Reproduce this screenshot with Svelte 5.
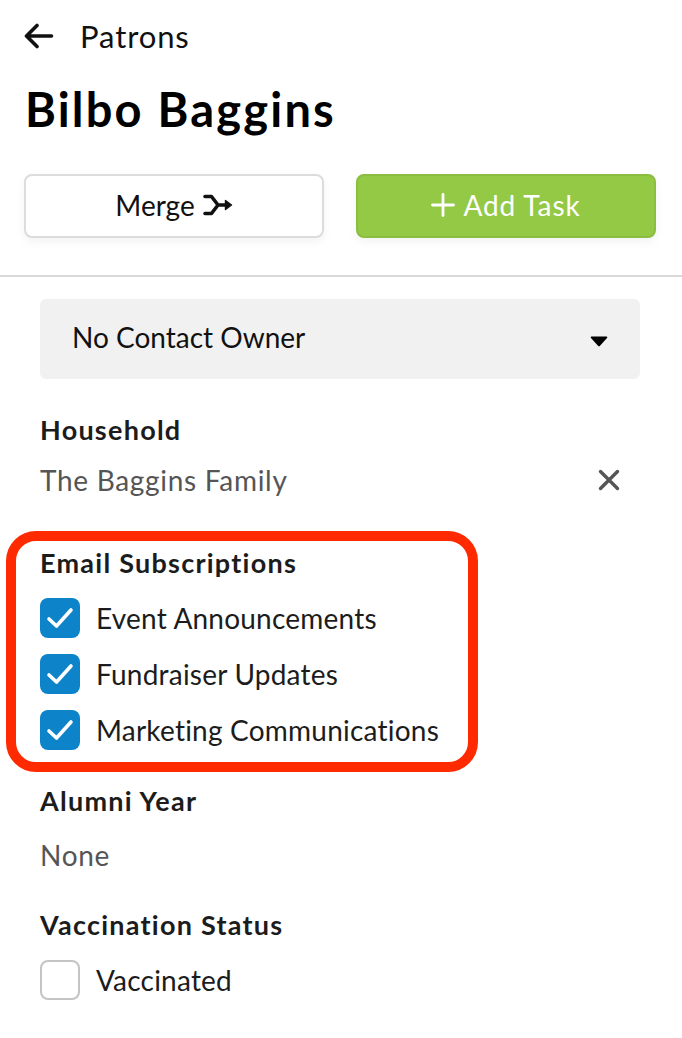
<script>
  const subscriptions = ['Event Announcements', 'Fundraiser Updates', 'Marketing Communications'];
</script>

<div class="page">
  <header class="top">
    <div class="crumb">
      <svg class="back" viewBox="0 0 30 26" fill="none" stroke="currentColor" stroke-width="3.6" stroke-linecap="round" stroke-linejoin="round">
        <path d="M27.5 13 H3 M13 2.5 L2.5 13 L13 23.5"/>
      </svg>
      <span>Patrons</span>
    </div>
    <h1>Bilbo Baggins</h1>
    <div class="actions">
      <button class="btn">
        Merge
        <svg class="merge" viewBox="0 0 30 22" fill="none" stroke="currentColor" stroke-width="3.6" stroke-linecap="round" stroke-linejoin="round">
          <path d="M2 2.5 H8.5 L15 11 L8.5 19.5 H2 M15 11 H23"/>
          <path d="M22.5 6.5 L28.5 11 L22.5 15.5 Z" fill="currentColor" stroke-width="1.4"/>
        </svg>
      </button>
      <button class="btn primary">
        <svg class="plus" viewBox="0 0 24 24" fill="none" stroke="currentColor" stroke-width="2.8" stroke-linecap="round">
          <path d="M12 1.5 V22.5 M1.5 12 H22.5"/>
        </svg>
        <span class="add-label">Add Task</span>
      </button>
    </div>
  </header>

  <main class="body">
    <div class="select">
      <span class="select-label">No Contact Owner</span>
      <svg class="caret" viewBox="0 0 18 11"><path d="M1.5 0.5 H16.5 Q18 0.5 17 2 L10 9.8 Q9 10.8 8 9.8 L1 2 Q0 0.5 1.5 0.5 Z" fill="#000"/></svg>
    </div>

    <section class="household">
      <h2>Household</h2>
      <div class="value-row">
        <span class="muted">The Baggins Family</span>
        <svg class="close" viewBox="0 0 22 22" fill="none" stroke="#555" stroke-width="3.4" stroke-linecap="round">
          <path d="M2.5 2.5 L19.5 19.5 M19.5 2.5 L2.5 19.5"/>
        </svg>
      </div>
    </section>

    <section class="subs">
      <h2>Email Subscriptions</h2>
      <ul>
        {#each subscriptions as item}
          <li>
            <span class="box checked">
              <svg viewBox="0 0 40 40" fill="none" stroke="#fff" stroke-width="3.6" stroke-linecap="round" stroke-linejoin="round">
                <path d="M9 21 L16.5 28 L31 12"/>
              </svg>
            </span>
            <span class="label">{item}</span>
          </li>
        {/each}
      </ul>
      <div class="highlight"></div>
    </section>

    <section class="alumni">
      <h2>Alumni Year</h2>
      <p class="muted">None</p>
    </section>

    <section class="vaccination">
      <h2>Vaccination Status</h2>
      <div class="check-row"><span class="box"></span> <span class="label">Vaccinated</span></div>
    </section>
  </main>
</div>

<style>
  :global(body) {
    margin: 0;
    background: #fff;
  }
  .page {
    height: 1038px;
    overflow: hidden;
    font-family: Lato, "Open Sans", sans-serif;
    color: #1c1c1c;
    font-size: 28px;
  }
  .top {
    padding: 15px 26px 37px 24px;
    border-bottom: 2px solid #d9d9d9;
  }
  .crumb {
    display: flex;
    align-items: center;
    gap: 26px;
    height: 42px;
    font-size: 31px;
    letter-spacing: 0.9px;
    color: #111;
  }
  .back {
    width: 30px;
    height: 26px;
  }
  h1 {
    margin: 23px 0 0;
    font-size: 47px;
    line-height: 58px;
    font-weight: 700;
    letter-spacing: 2.2px;
    color: #000;
    padding-left: 1px;
  }
  .actions {
    display: grid;
    grid-template-columns: 300px 300px;
    gap: 32px;
    margin-top: 36px;
  }
  .btn {
    height: 64px;
    border: 2px solid #dcdcdc;
    border-radius: 8px;
    background: #fff;
    box-shadow: 0 4px 10px rgba(0, 0, 0, 0.05);
    font: inherit;
    color: #111;
    display: flex;
    align-items: center;
    justify-content: center;
    gap: 8px;
    padding: 0 0 2px;
  }
  .primary {
    background: #94c945;
    border-color: #8abd40;
    color: #fff;
  }
  .add-label {
    letter-spacing: 0.9px;
  }
  .merge {
    width: 30px;
    height: 22px;
  }
  .plus {
    width: 24px;
    height: 24px;
  }
  .body {
    padding: 22px 42px 0 40px;
  }
  .select {
    height: 80px;
    border-radius: 6px;
    background: #f1f1f1;
    display: flex;
    align-items: center;
    justify-content: space-between;
    padding: 0 32px;
    color: #111;
  }
  .select-label {
    padding-bottom: 5px;
  }
  .caret {
    width: 18px;
    height: 11px;
    margin-top: 4px;
  }
  h2 {
    margin: 0;
    font-size: 27px;
    line-height: 34px;
    font-weight: 700;
    letter-spacing: 1.25px;
    color: #1c1c1c;
  }
  .household {
    margin-top: 34px;
  }
  .value-row {
    display: flex;
    align-items: center;
    justify-content: space-between;
    padding-right: 20px;
    margin-top: 16px;
    height: 34px;
  }
  .muted {
    color: #555;
    margin: 0;
    letter-spacing: 0.7px;
  }
  .close {
    width: 22px;
    height: 22px;
  }
  .subs {
    position: relative;
    margin-top: 49px;
  }
  ul {
    list-style: none;
    margin: 18px 0 0;
    padding: 0;
  }
  li, .check-row {
    display: flex;
    align-items: center;
    gap: 16px;
    height: 40px;
    margin-bottom: 16px;
  }
  .label {
    letter-spacing: 0.22px;
  }
  .box {
    width: 40px;
    height: 40px;
    box-sizing: border-box;
    border-radius: 8px;
    border: 2px solid #c4c4c4;
    flex: none;
  }
  .checked {
    border: none;
    background: #0d84c9;
  }
  .checked svg {
    display: block;
  }
  .highlight {
    position: absolute;
    left: -34px;
    top: -15px;
    width: 472px;
    height: 241px;
    box-sizing: border-box;
    border: 10px solid #ff2a00;
    border-radius: 30px;
    pointer-events: none;
  }
  .alumni {
    margin-top: 34px;
  }
  .alumni p {
    margin-top: 20px;
    line-height: 34px;
  }
  .vaccination {
    margin-top: 36px;
  }
  .check-row {
    margin-top: 18px;
  }
</style>
